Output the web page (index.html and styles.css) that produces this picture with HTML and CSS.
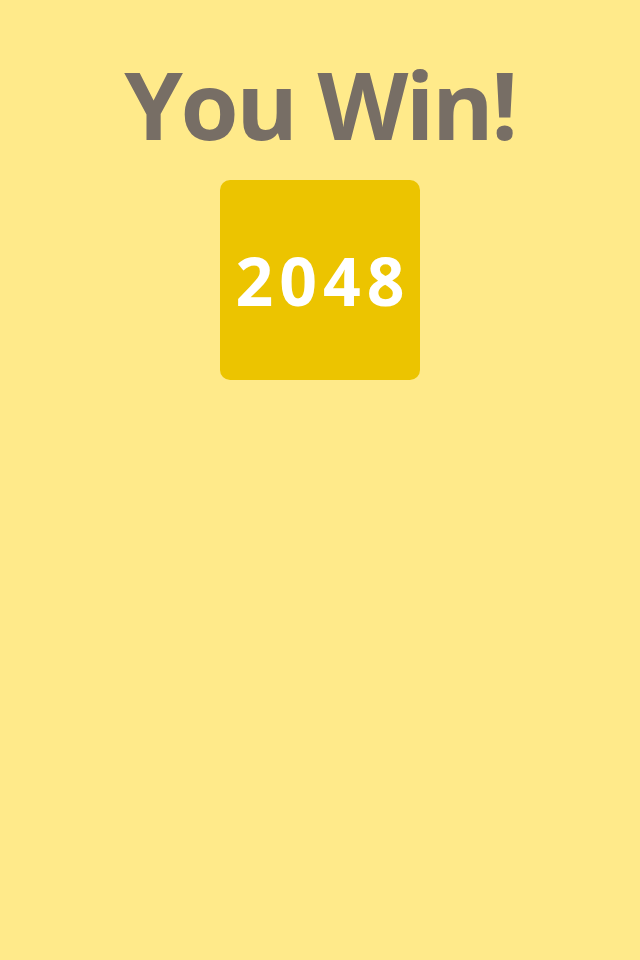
FILE: index.html
```html
<!DOCTYPE html>
<html lang="en">
<head>
<meta charset="utf-8">
<title>You Win!</title>
<link rel="stylesheet" href="styles.css">
</head>
<body>
<main class="screen">
  <h1 class="title">You Win!</h1>
  <div class="tile"><span class="tile-value">2048</span></div>
</main>
</body>
</html>
```
FILE: styles.css
```css
html, body {
  margin: 0;
  padding: 0;
  background: #ffea8a;
  height: 100%;
}
.screen {
  display: flex;
  flex-direction: column;
  align-items: center;
  padding-top: 40px;
  font-family: "Open Sans", "Noto Sans", sans-serif;
}
.title {
  margin: 0;
  font-size: 94px;
  font-weight: 700;
  letter-spacing: -2.5px;
  line-height: 128px;
  height: 128px;
  color: #776e65;
}
.tile {
  margin-top: 12px;
  width: 200px;
  height: 200px;
  border-radius: 10px;
  background: #ecc400;
  display: flex;
  align-items: center;
  justify-content: center;
}
.tile-value {
  color: #ffffff;
  font-size: 66px;
  font-weight: 700;
  letter-spacing: 6px;
  padding-left: 6px;
  line-height: 90px;
}
```
